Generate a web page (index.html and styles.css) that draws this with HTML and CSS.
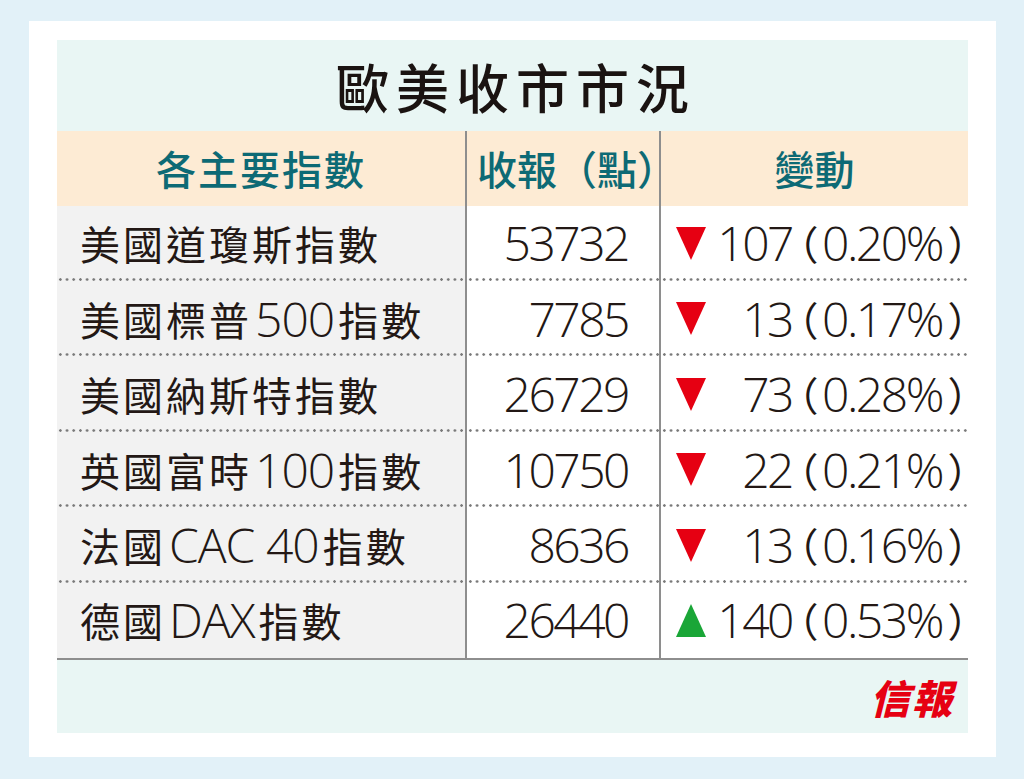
FILE: index.html
```html
<!DOCTYPE html>
<html lang="zh-Hant">
<head>
<meta charset="utf-8">
<title>歐美收市市況</title>
<link rel="stylesheet" href="styles.css">
</head>
<body>
<div class="card">
  <div class="panel">
    <div class="title">歐美收市市況</div>
    <div class="row head">
      <div class="cell c1">各主要指數</div>
      <div class="cell c2">收報（點）</div>
      <div class="cell c3">變動</div>
    </div>

    <div class="row data">
      <div class="cell c1">美國道瓊斯指數</div>
      <div class="cell c2"><span class="lat">53732</span></div>
      <div class="cell c3">
        <svg class="tri" viewBox="0 0 30 33"><polygon points="0,0 30,0 15,33" fill="#e60012"/></svg>
        <span class="lat chg">107</span><span class="pct"><span class="po">（</span><span class="lat">0.20%</span><span class="pc">）</span></span>
      </div>
    </div>

    <div class="row data">
      <div class="cell c1">美國標普<span class="lat sp">500</span>指數</div>
      <div class="cell c2"><span class="lat">7785</span></div>
      <div class="cell c3">
        <svg class="tri" viewBox="0 0 30 33"><polygon points="0,0 30,0 15,33" fill="#e60012"/></svg>
        <span class="lat chg">13</span><span class="pct"><span class="po">（</span><span class="lat">0.17%</span><span class="pc">）</span></span>
      </div>
    </div>

    <div class="row data">
      <div class="cell c1">美國納斯特指數</div>
      <div class="cell c2"><span class="lat">26729</span></div>
      <div class="cell c3">
        <svg class="tri" viewBox="0 0 30 33"><polygon points="0,0 30,0 15,33" fill="#e60012"/></svg>
        <span class="lat chg">73</span><span class="pct"><span class="po">（</span><span class="lat">0.28%</span><span class="pc">）</span></span>
      </div>
    </div>

    <div class="row data">
      <div class="cell c1">英國富時<span class="lat sp">100</span>指數</div>
      <div class="cell c2"><span class="lat">10750</span></div>
      <div class="cell c3">
        <svg class="tri" viewBox="0 0 30 33"><polygon points="0,0 30,0 15,33" fill="#e60012"/></svg>
        <span class="lat chg">22</span><span class="pct"><span class="po">（</span><span class="lat">0.21%</span><span class="pc">）</span></span>
      </div>
    </div>

    <div class="row data">
      <div class="cell c1">法國<span class="lat sp">CAC 40</span>指數</div>
      <div class="cell c2"><span class="lat">8636</span></div>
      <div class="cell c3">
        <svg class="tri" viewBox="0 0 30 33"><polygon points="0,0 30,0 15,33" fill="#e60012"/></svg>
        <span class="lat chg">13</span><span class="pct"><span class="po">（</span><span class="lat">0.16%</span><span class="pc">）</span></span>
      </div>
    </div>

    <div class="row data last">
      <div class="cell c1">德國<span class="lat sp">DAX</span>指數</div>
      <div class="cell c2"><span class="lat">26440</span></div>
      <div class="cell c3">
        <svg class="tri" viewBox="0 0 30 33"><polygon points="0,33 30,33 15,0" fill="#1aa637"/></svg>
        <span class="lat chg">140</span><span class="pct"><span class="po">（</span><span class="lat">0.53%</span><span class="pc">）</span></span>
      </div>
    </div>

    <div class="footer"><span class="logo">信報</span></div>
  </div>
</div>
</body>
</html>
```

FILE: styles.css
```css
html, body {
  margin: 0;
  padding: 0;
}
body {
  background: #e2f1f8;
  width: 1024px;
  height: 779px;
  overflow: hidden;
  font-family: "Noto Sans CJK TC", "Noto Sans CJK SC", sans-serif;
  color: #231815;
}
.card {
  margin: 21px 28px 0 29px;
  width: 967px;
  height: 736px;
  box-sizing: border-box;
  background: #ffffff;
  padding: 19px 28px 24px 28px;
}
.panel {
  width: 911px;
  height: 693px;
  display: flex;
  flex-direction: column;
}
.title {
  height: 91px;
  background: #e9f6f4;
  display: flex;
  align-items: center;
  justify-content: center;
  font-size: 53px;
  font-weight: 500;
  letter-spacing: 7px;
  padding-left: 7px;
  padding-top: 2px;
  box-sizing: border-box;
  color: #1a1311;
  line-height: 1;
}
.row {
  display: grid;
  grid-template-columns: 408px 194px 309px;
}
.cell {
  display: flex;
  align-items: center;
  box-sizing: border-box;
  line-height: 1;
}
.c2, .c3 {
  border-left: 2px solid #8e8e8e;
}
.head {
  height: 75px;
  background: #fdebd4;
}
.head .cell {
  justify-content: center;
  color: #0d6a75;
  font-size: 40px;
  font-weight: 500;
}
.head .c1 {
  letter-spacing: 2px;
}
.head .c2 {
  padding-left: 10px;
}
.data {
  height: 75.67px;
}
.data .cell {
  font-size: 40px;
  background: radial-gradient(circle, #7a7a7a 1.1px, transparent 1.5px) left bottom / 6.7px 3px repeat-x, #ffffff;
}
.data .c1 {
  padding-left: 23px;
  letter-spacing: 3px;
  background: radial-gradient(circle, #7a7a7a 1.1px, transparent 1.5px) left bottom / 6.7px 3px repeat-x, #f2f2f2;
}
.data.last .cell {
  background: #ffffff;
}
.data.last .c1 {
  background: #f2f2f2;
}
.lat {
  font-family: "Open Sans", "Noto Sans", sans-serif;
  font-weight: 300;
  font-size: 48px;
  letter-spacing: -2.5px;
}
.c1 .lat.sp {
  letter-spacing: -1px;
  margin: 0 4px 0 3px;
}
.data .c2 {
  justify-content: flex-end;
  padding-right: 31px;
}
.data .c3 {
  padding-left: 15px;
  letter-spacing: 0;
}
.tri {
  width: 30px;
  height: 33px;
  flex: none;
}
.chg {
  width: 86px;
  text-align: right;
  flex: none;
}
.pct {
  display: flex;
  align-items: center;
}
.po {
  font-feature-settings: "palt";
  margin-left: 5px;
  margin-right: 5px;
}
.pc {
  font-feature-settings: "palt";
  margin-left: 7px;
}
.footer {
  height: 73px;
  border-top: 2px solid #8e8e8e;
  background: #e9f6f4;
  display: flex;
  align-items: center;
  justify-content: flex-end;
  padding-right: 14px;
}
.logo {
  color: #e60012;
  font-size: 40px;
  font-weight: 900;
  font-style: italic;
  letter-spacing: 2px;
  line-height: 1;
}
```
